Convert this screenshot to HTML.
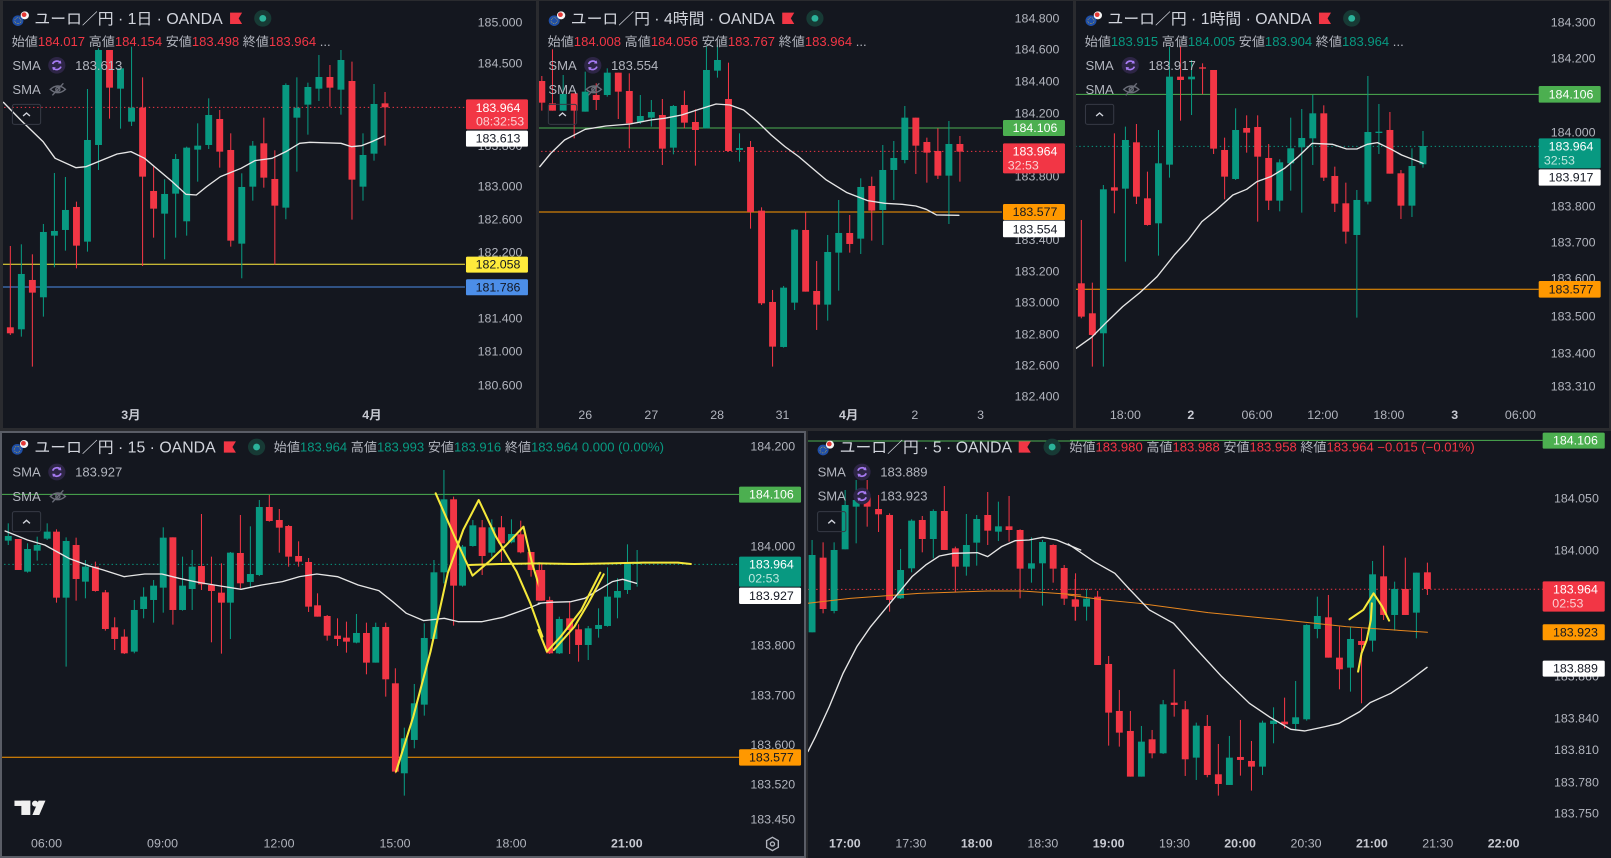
<!DOCTYPE html>
<html><head><meta charset="utf-8">
<style>
html,body{margin:0;padding:0;background:#2a2b2f;width:1611px;height:858px;overflow:hidden}
svg{display:block}
text{font-family:"Liberation Sans","Noto Sans CJK JP",sans-serif}
.ax{font-size:36px;fill:#b2b5be;text-anchor:end}
.tm{font-size:36px;fill:#b2b5be;text-anchor:middle}
.tb{font-weight:bold;fill:#c8cad2}
.tt{font-size:46px;fill:#d1d4dc}
.lg{font-size:38px;fill:#b2b5be}
.lb{font-size:36px;text-anchor:middle}
</style></head><body>
<svg width="1611" height="858" viewBox="0 0 1611 858" xmlns="http://www.w3.org/2000/svg">
<defs>
<clipPath id="k1"><rect x="3" y="1" width="533" height="427"/></clipPath>
<clipPath id="k2"><rect x="539" y="1" width="534" height="427"/></clipPath>
<clipPath id="k3"><rect x="1076" y="1" width="533" height="427"/></clipPath>
<clipPath id="k4"><rect x="2" y="433" width="802" height="423"/></clipPath>
<clipPath id="k5"><rect x="808" y="431" width="803" height="427"/></clipPath>
<g id="sm"><circle r="25" fill="#2d2545"/><path d="M-12,-4 A13,13 0 0 1 11,-7 M12,4 A13,13 0 0 1 -11,7" stroke="#a77bf3" stroke-width="5" fill="none"/><path d="M11,-15 L13,-5 L3,-6 Z M-11,15 L-13,5 L-3,6Z" fill="#a77bf3"/></g>
<g id="eye"><path d="M-22,0 Q0,-20 22,0 Q0,20 -22,0Z" stroke="#6a6d78" stroke-width="4" fill="none"/><circle r="6" stroke="#6a6d78" stroke-width="4" fill="none"/><line x1="-16" y1="18" x2="16" y2="-18" stroke="#6a6d78" stroke-width="4"/></g>
<g id="ic"><circle cx="0" cy="0" r="16" fill="#1f4fa8"/><circle cx="0" cy="0" r="9" fill="none" stroke="#f3c623" stroke-width="2" stroke-dasharray="2 3"/><circle cx="20" cy="-16" r="12" fill="#f5f5f5"/><circle cx="18" cy="-18" r="7" fill="#e53935"/></g>
<g id="bt"><rect x="0" y="0" width="82" height="60" rx="6" fill="none" stroke="#363a45" stroke-width="3"/><path d="M31,35 L41,26 L51,35" stroke="#d1d4dc" stroke-width="4" fill="none"/></g>
</defs>
<rect x="0" y="0" width="1611" height="858" fill="#2a2b2f"/>
<rect x="3" y="1" width="533" height="427" fill="#14171f"/>
<rect x="539" y="1" width="534" height="427" fill="#14171f"/>
<rect x="1076" y="1" width="533" height="427" fill="#14171f"/>
<rect x="1" y="432" width="804" height="425" fill="#14171f" stroke="#5a5d66" stroke-width="2"/>
<rect x="808" y="431" width="803" height="427" fill="#14171f"/>

<!-- PANEL 1 -->
<g clip-path="url(#k1)"><g transform="translate(0,0) scale(0.3444,0.3333)">
<line x1="0" y1="322" x2="1350" y2="322" stroke="#f23645" stroke-width="3" stroke-dasharray="4 8"/>
<line x1="0" y1="793" x2="1350" y2="793" stroke="#ffeb3b" stroke-width="3"/>
<line x1="0" y1="861" x2="1350" y2="861" stroke="#4c8ee8" stroke-width="3"/>
<g id="c1"></g>
<text class="ax" x="1517" y="80">185.000</text><text class="ax" x="1517" y="202">184.500</text><text class="ax" x="1517" y="450">183.800</text><text class="ax" x="1517" y="572">183.000</text><text class="ax" x="1517" y="670">182.600</text><text class="ax" x="1517" y="769">182.200</text><text class="ax" x="1517" y="967">181.400</text><text class="ax" x="1517" y="1066">181.000</text><text class="ax" x="1517" y="1169">180.600</text>
<rect x="1353" y="298" width="180" height="90" rx="4" fill="#f23645"/><text class="lb" x="1446" y="336" fill="#fff">183.964</text><text class="lb" x="1452" y="377" fill="#fbd0d3">08:32:53</text>
<rect x="1353" y="392" width="180" height="48" rx="4" fill="#fff"/><text class="lb" x="1446" y="428" fill="#131722">183.613</text>
<rect x="1353" y="770" width="180" height="48" rx="4" fill="#ffeb3b"/><text class="lb" x="1446" y="806" fill="#131722">182.058</text>
<rect x="1353" y="838" width="180" height="48" rx="4" fill="#4c8ee8"/><text class="lb" x="1446" y="874" fill="#131722">181.786</text>
<text class="tm tb" x="380" y="1257">3月</text><text class="tm tb" x="1080" y="1257">4月</text>
<use href="#ic" x="52" y="62"/><text class="tt" x="100" y="72">ユーロ／円 · 1日 · OANDA</text>
<path d="M668,38 h35 l-10,17 l10,17 h-35z" fill="#f23645"/><circle cx="763" cy="55" r="25" fill="#173a35"/><circle cx="763" cy="55" r="10" fill="#2bb39a"/>
<text class="lg" x="34" y="138">始値<tspan fill="#f23645">184.017</tspan> 高値<tspan fill="#f23645">184.154</tspan> 安値<tspan fill="#f23645">183.498</tspan> 終値<tspan fill="#f23645">183.964</tspan> ...</text>
<text class="lg" x="36" y="210">SMA</text><use href="#sm" x="165" y="196"/><text class="lg" x="218" y="210" fill="#e8e9ed">183.613</text>
<text class="lg" x="36" y="282" fill="#4e515b">SMA</text><use href="#eye" x="168" y="268"/>
<use href="#bt" x="36" y="313"/>
</g></g>

<!-- PANEL 2 -->
<g clip-path="url(#k2)"><g transform="translate(537,0) scale(0.3444,0.3333)">
<line x1="0" y1="384" x2="1350" y2="384" stroke="#4caf50" stroke-width="3"/>
<line x1="0" y1="454" x2="1350" y2="454" stroke="#f23645" stroke-width="3" stroke-dasharray="4 8"/>
<line x1="0" y1="636" x2="1350" y2="636" stroke="#ff9800" stroke-width="3"/>
<g id="c2"></g>
<text class="ax" x="1517" y="67">184.800</text><text class="ax" x="1517" y="160">184.600</text><text class="ax" x="1517" y="257">184.400</text><text class="ax" x="1517" y="352">184.200</text><text class="ax" x="1517" y="542">183.800</text><text class="ax" x="1517" y="732">183.400</text><text class="ax" x="1517" y="827">183.200</text><text class="ax" x="1517" y="919">183.000</text><text class="ax" x="1517" y="1015">182.800</text><text class="ax" x="1517" y="1109">182.600</text><text class="ax" x="1517" y="1202">182.400</text>
<rect x="1353" y="360" width="180" height="48" rx="4" fill="#4caf50"/><text class="lb" x="1446" y="396" fill="#fff">184.106</text>
<rect x="1353" y="430" width="180" height="90" rx="4" fill="#f23645"/><text class="lb" x="1446" y="467" fill="#fff">183.964</text><text class="lb" x="1412" y="508" fill="#fbd0d3">32:53</text>
<rect x="1353" y="612" width="180" height="48" rx="4" fill="#ff9800"/><text class="lb" x="1446" y="648" fill="#131722">183.577</text>
<rect x="1353" y="662" width="180" height="50" rx="4" fill="#fff"/><text class="lb" x="1446" y="700" fill="#131722">183.554</text>
<text class="tm" x="140" y="1257">26</text><text class="tm" x="332" y="1257">27</text><text class="tm" x="523" y="1257">28</text><text class="tm" x="713" y="1257">31</text><text class="tm tb" x="905" y="1257">4月</text><text class="tm" x="1097" y="1257">2</text><text class="tm" x="1288" y="1257">3</text>
<use href="#ic" x="50" y="62"/><text class="tt" x="98" y="72">ユーロ／円 · 4時間 · OANDA</text>
<path d="M712,38 h35 l-10,17 l10,17 h-35z" fill="#f23645"/><circle cx="807" cy="55" r="25" fill="#173a35"/><circle cx="807" cy="55" r="10" fill="#2bb39a"/>
<text class="lg" x="31" y="138">始値<tspan fill="#f23645">184.008</tspan> 高値<tspan fill="#f23645">184.056</tspan> 安値<tspan fill="#f23645">183.767</tspan> 終値<tspan fill="#f23645">183.964</tspan> ...</text>
<text class="lg" x="33" y="210">SMA</text><use href="#sm" x="162" y="196"/><text class="lg" x="215" y="210" fill="#e8e9ed">183.554</text>
<text class="lg" x="33" y="282" fill="#4e515b">SMA</text><use href="#eye" x="165" y="268"/>
<use href="#bt" x="33" y="313"/>
</g></g>

<!-- PANEL 3 -->
<g clip-path="url(#k3)"><g transform="translate(1071,0) scale(0.3444,0.3333)">
<line x1="0" y1="283" x2="1358" y2="283" stroke="#4caf50" stroke-width="3"/>
<line x1="0" y1="439" x2="1358" y2="439" stroke="#089981" stroke-width="3" stroke-dasharray="4 8"/>
<line x1="0" y1="868" x2="1358" y2="868" stroke="#ff9800" stroke-width="3"/>
<g id="c3"></g>
<text class="ax" x="1523" y="80">184.300</text><text class="ax" x="1523" y="187">184.200</text><text class="ax" x="1523" y="409">184.000</text><text class="ax" x="1523" y="632">183.800</text><text class="ax" x="1523" y="739">183.700</text><text class="ax" x="1523" y="847">183.600</text><text class="ax" x="1523" y="962">183.500</text><text class="ax" x="1523" y="1072">183.400</text><text class="ax" x="1523" y="1172">183.310</text>
<rect x="1358" y="258" width="180" height="50" rx="4" fill="#4caf50"/><text class="lb" x="1452" y="296" fill="#fff">184.106</text>
<rect x="1358" y="415" width="180" height="90" rx="4" fill="#089981"/><text class="lb" x="1452" y="452" fill="#fff">183.964</text><text class="lb" x="1418" y="494" fill="#bfe8df">32:53</text>
<rect x="1358" y="508" width="180" height="49" rx="4" fill="#fff"/><text class="lb" x="1452" y="545" fill="#131722">183.917</text>
<rect x="1358" y="843" width="180" height="50" rx="4" fill="#ff9800"/><text class="lb" x="1452" y="881" fill="#131722">183.577</text>
<text class="tm" x="158" y="1257">18:00</text><text class="tm tb" x="348" y="1257">2</text><text class="tm" x="540" y="1257">06:00</text><text class="tm" x="731" y="1257">12:00</text><text class="tm" x="923" y="1257">18:00</text><text class="tm tb" x="1114" y="1257">3</text><text class="tm" x="1305" y="1257">06:00</text>
<use href="#ic" x="58" y="62"/><text class="tt" x="106" y="72">ユーロ／円 · 1時間 · OANDA</text>
<path d="M720,38 h35 l-10,17 l10,17 h-35z" fill="#f23645"/><circle cx="815" cy="55" r="25" fill="#173a35"/><circle cx="815" cy="55" r="10" fill="#2bb39a"/>
<text class="lg" x="40" y="138">始値<tspan fill="#089981">183.915</tspan> 高値<tspan fill="#089981">184.005</tspan> 安値<tspan fill="#089981">183.904</tspan> 終値<tspan fill="#089981">183.964</tspan> ...</text>
<text class="lg" x="42" y="210">SMA</text><use href="#sm" x="172" y="196"/><text class="lg" x="225" y="210" fill="#e8e9ed">183.917</text>
<text class="lg" x="42" y="282" fill="#4e515b">SMA</text><use href="#eye" x="175" y="268"/>
<use href="#bt" x="42" y="313"/>
</g></g>

<!-- PANEL 4 -->
<g clip-path="url(#k4)">
<g transform="translate(0,430) scale(0.3444,0.3333)">
<line x1="0" y1="193" x2="2146" y2="193" stroke="#4caf50" stroke-width="3"/>
<line x1="0" y1="403" x2="2146" y2="403" stroke="#089981" stroke-width="3" stroke-dasharray="4 8"/>
<line x1="0" y1="982" x2="2146" y2="982" stroke="#ff9800" stroke-width="3"/>
<g id="c4a"></g>
<text class="tm" x="135" y="1252">06:00</text><text class="tm" x="472" y="1252">09:00</text><text class="tm" x="810" y="1252">12:00</text><text class="tm" x="1147" y="1252">15:00</text><text class="tm" x="1484" y="1252">18:00</text>
<g fill="#f0f0f0"><rect x="42" y="1112" width="46" height="16"/><rect x="62" y="1112" width="26" height="43"/><circle cx="102" cy="1121" r="9"/><path d="M112,1112 h20 l-18,43 h-20z"/></g>
<use href="#ic" x="50" y="58"/><text class="tt" x="100" y="68">ユーロ／円 · 15 · OANDA</text>
<path d="M650,34 h35 l-10,17 l10,17 h-35z" fill="#f23645"/><circle cx="745" cy="51" r="25" fill="#173a35"/><circle cx="745" cy="51" r="10" fill="#2bb39a"/>
<text class="lg" x="795" y="64">始値<tspan fill="#089981">183.964</tspan> 高値<tspan fill="#089981">183.993</tspan> 安値<tspan fill="#089981">183.916</tspan> 終値<tspan fill="#089981">183.964</tspan> <tspan fill="#089981">0.000 (0.00%)</tspan></text>
<text class="lg" x="36" y="140">SMA</text><use href="#sm" x="165" y="126"/><text class="lg" x="218" y="140" fill="#e8e9ed">183.927</text>
<text class="lg" x="36" y="213" fill="#4e515b">SMA</text><use href="#eye" x="168" y="199"/>
<use href="#bt" x="36" y="245"/>
</g>
<g transform="translate(540,430) scale(0.3444,0.3333)">
<g id="c4b"></g>
<text class="ax" x="741" y="62">184.200</text><text class="ax" x="741" y="362">184.000</text><text class="ax" x="741" y="659">183.800</text><text class="ax" x="741" y="809">183.700</text><text class="ax" x="741" y="957">183.600</text><text class="ax" x="741" y="1075">183.520</text><text class="ax" x="741" y="1180">183.450</text>
<rect x="578" y="170" width="180" height="48" rx="4" fill="#4caf50"/><text class="lb" x="672" y="206" fill="#fff">184.106</text>
<rect x="578" y="380" width="180" height="90" rx="4" fill="#089981"/><text class="lb" x="672" y="416" fill="#fff">183.964</text><text class="lb" x="650" y="458" fill="#bfe8df">02:53</text>
<rect x="578" y="473" width="180" height="49" rx="4" fill="#fff"/><text class="lb" x="672" y="510" fill="#131722">183.927</text>
<rect x="578" y="958" width="180" height="49" rx="4" fill="#ff9800"/><text class="lb" x="672" y="995" fill="#131722">183.577</text>
<text class="tm tb" x="252" y="1252">21:00</text>
<path d="M675,1222 l17,10 v20 l-17,10 l-17,-10 v-20z" fill="none" stroke="#b2b5be" stroke-width="4"/><circle cx="675" cy="1242" r="6" fill="none" stroke="#b2b5be" stroke-width="4"/>
</g>
</g>

<!-- PANEL 5 -->
<g clip-path="url(#k5)">
<g transform="translate(540,430) scale(0.3444,0.3333)">
<line x1="778" y1="478" x2="1600" y2="478" stroke="#f23645" stroke-width="3" stroke-dasharray="4 8"/>
<line x1="778" y1="33" x2="1600" y2="33" stroke="#4caf50" stroke-width="3"/>
<g id="c5a"></g>
<text class="tm tb" x="885" y="1252">17:00</text><text class="tm" x="1077" y="1252">17:30</text><text class="tm tb" x="1268" y="1252">18:00</text><text class="tm" x="1460" y="1252">18:30</text>
<use href="#ic" x="822" y="60"/><text class="tt" x="870" y="68">ユーロ／円 · 5 · OANDA</text>
<path d="M1390,34 h35 l-10,17 l10,17 h-35z" fill="#f23645"/><circle cx="1487" cy="51" r="25" fill="#173a35"/><circle cx="1487" cy="51" r="10" fill="#2bb39a"/>
<text class="lg" x="1537" y="64">始値<tspan fill="#f23645">183.980</tspan> 高値<tspan fill="#f23645">183.988</tspan> 安値<tspan fill="#f23645">183.958</tspan> 終値<tspan fill="#f23645">183.964</tspan> <tspan fill="#f23645">−0.015 (−0.01%)</tspan></text>
<text class="lg" x="806" y="140">SMA</text><use href="#sm" x="935" y="126"/><text class="lg" x="988" y="140" fill="#e8e9ed">183.889</text>
<text class="lg" x="806" y="212">SMA</text><use href="#sm" x="935" y="198"/><text class="lg" x="988" y="212" fill="#f7931a">183.923</text>
<use href="#bt" x="806" y="245"/>
</g>
<g transform="translate(1070,380) scale(0.345,0.3333)">
<line x1="0" y1="628" x2="1370" y2="628" stroke="#f23645" stroke-width="3" stroke-dasharray="4 8"/>
<line x1="0" y1="181" x2="1370" y2="181" stroke="#4caf50" stroke-width="3"/>
<g id="c5b"></g>
<text class="ax" x="1533" y="367">184.050</text><text class="ax" x="1533" y="524">184.000</text><text class="ax" x="1533" y="902">183.860</text><text class="ax" x="1533" y="1027">183.840</text><text class="ax" x="1533" y="1122">183.810</text><text class="ax" x="1533" y="1219">183.780</text><text class="ax" x="1533" y="1312">183.750</text>
<rect x="1370" y="158" width="180" height="48" rx="4" fill="#4caf50"/><text class="lb" x="1465" y="194" fill="#fff">184.106</text>
<rect x="1370" y="604" width="180" height="91" rx="4" fill="#f23645"/><text class="lb" x="1465" y="641" fill="#fff">183.964</text><text class="lb" x="1443" y="683" fill="#fbd0d3">02:53</text>
<rect x="1370" y="733" width="180" height="48" rx="4" fill="#ff9800"/><text class="lb" x="1465" y="769" fill="#131722">183.923</text>
<rect x="1370" y="842" width="180" height="48" rx="4" fill="#fff"/><text class="lb" x="1465" y="878" fill="#131722">183.889</text>
<text class="tm tb" x="112" y="1402">19:00</text><text class="tm" x="303" y="1402">19:30</text><text class="tm tb" x="493" y="1402">20:00</text><text class="tm" x="684" y="1402">20:30</text><text class="tm tb" x="875" y="1402">21:00</text><text class="tm" x="1066" y="1402">21:30</text><text class="tm tb" x="1257" y="1402">22:00</text>
</g>
</g>
</svg>
<script>
const NS="http://www.w3.org/2000/svg",GC="#089981",RC="#f23645";
function el(p,t,a){const e=document.createElementNS(NS,t);for(const k in a)e.setAttribute(k,a[k]);p.appendChild(e);return e}
function C(id,arr,w){const g=document.getElementById(id);w=w||20;
for(const [x,bt,bb,wt,wb,c] of arr){const col=c=='g'?GC:RC;
el(g,'line',{x1:x,x2:x,y1:wt,y2:wb,stroke:col,'stroke-width':3});
el(g,'rect',{x:x-w/2,y:bt,width:w,height:Math.max(bb-bt,4),fill:col});}}
function L(id,pts,col,w){const g=document.getElementById(id);
el(g,'polyline',{points:pts.map(p=>p.join(',')).join(' '),fill:'none',stroke:col,'stroke-width':w||4,'stroke-linejoin':'round','stroke-linecap':'round'});}
C('c1',[[30,982,1000,738,1005,'r'],[62,822,988,733,1010,'g'],[94,840,878,763,1100,'r'],[126,696,892,672,950,'g'],[158,693,707,519,802,'g'],[190,630,690,531,752,'g'],[222,621,737,605,805,'r'],[254,420,725,267,755,'g'],[286,150,435,145,510,'g'],[318,150,263,150,356,'r'],[350,205,266,205,386,'g'],[382,323,365,140,378,'g'],[414,323,530,232,798,'r'],[446,573,626,500,713,'r'],[478,582,641,538,778,'g'],[510,477,581,462,713,'g'],[542,443,664,440,707,'g'],[574,437,449,370,545,'g'],[606,345,435,295,447,'g'],[638,357,455,330,503,'r'],[670,450,722,400,740,'r'],[702,561,731,520,835,'g'],[734,437,560,423,602,'g'],[766,430,533,353,563,'r'],[798,537,617,451,793,'r'],[830,255,623,250,658,'g'],[862,323,353,232,515,'g'],[894,261,314,248,404,'g'],[926,231,266,165,303,'g'],[958,231,263,195,320,'r'],[990,180,269,150,344,'g'],[1022,243,539,185,659,'r'],[1054,465,560,400,602,'g'],[1086,312,461,252,482,'g'],[1118,310,322,276,437,'r']]);
L('c1',[[10,307],[60,360],[125,425],[160,475],[220,503],[250,500],[290,483],[340,462],[380,455],[420,475],[460,510],[500,545],[540,583],[570,585],[600,560],[640,530],[700,505],[740,482],[790,475],[830,455],[870,430],[900,427],[990,430],[1020,440],[1050,437],[1080,425],[1116,408]],'#e6e6e6');
C('c2',[[14,243,308,228,332,'r'],[45,310,332,148,332,'r'],[76,282,332,225,332,'g'],[108,280,332,280,415,'r'],[140,275,335,215,335,'g'],[172,285,300,250,330,'r'],[204,218,285,205,290,'g'],[236,218,275,218,357,'r'],[268,273,370,220,445,'r'],[300,348,366,285,372,'g'],[332,336,353,300,380,'g'],[364,345,446,297,495,'r'],[396,318,443,315,463,'g'],[428,315,368,272,385,'r'],[460,366,390,328,497,'r'],[492,210,385,140,385,'g'],[524,180,212,135,233,'g'],[556,297,453,188,455,'r'],[588,444,450,400,485,'g'],[620,441,636,423,686,'r'],[652,632,910,622,915,'r'],[684,906,1040,870,1100,'r'],[716,863,1041,858,1043,'g'],[748,689,908,687,930,'g'],[780,690,875,637,875,'r'],[812,873,914,783,990,'r'],[844,756,914,705,962,'g'],[876,699,758,600,872,'g'],[908,699,732,645,758,'r'],[940,561,716,535,762,'g'],[972,558,632,530,722,'r'],[1004,510,630,435,735,'g'],[1036,474,510,423,600,'g'],[1068,353,480,318,490,'g'],[1100,353,437,353,522,'r'],[1132,426,458,413,548,'r'],[1164,453,527,385,537,'r'],[1196,432,527,363,672,'g'],[1228,432,455,408,545,'r']]);
L('c2',[[8,500],[40,460],[80,420],[140,388],[200,378],[270,372],[330,360],[370,355],[420,345],[470,328],[520,312],[560,315],[600,330],[640,365],[680,405],[720,440],[760,470],[800,505],[840,540],[900,578],[960,602],[1010,610],[1060,613],[1100,618],[1130,628],[1160,645],[1225,646]],'#e6e6e6');
C('c3',[[30,850,950,660,955,'r'],[62,940,1005,848,1100,'r'],[94,568,1000,555,1100,'g'],[126,562,572,400,640,'r'],[158,420,566,380,785,'g'],[190,427,590,372,612,'r'],[222,595,675,515,677,'r'],[254,490,670,390,767,'g'],[286,230,494,140,533,'g'],[318,230,240,140,362,'r'],[350,230,238,180,345,'g'],[382,202,206,190,283,'r'],[414,210,446,210,462,'r'],[446,450,530,413,598,'r'],[478,390,537,325,540,'g'],[510,384,398,346,458,'r'],[542,381,470,346,665,'r'],[574,474,602,432,630,'r'],[606,487,602,478,634,'g'],[638,445,490,353,572,'g'],[670,414,442,327,638,'g'],[702,340,415,285,495,'g'],[734,340,533,316,543,'r'],[766,528,611,500,636,'r'],[798,610,695,548,731,'r'],[830,600,705,570,953,'g'],[862,396,605,228,613,'g'],[894,395,398,312,462,'g'],[926,390,521,336,521,'r'],[958,520,617,510,657,'r'],[990,498,617,445,651,'g'],[1022,438,493,393,503,'g']]);
L('c3',[[15,1045],[60,1012],[100,970],[150,920],[200,878],[250,830],[300,765],[340,720],[380,665],[420,632],[470,585],[510,568],[540,545],[580,530],[620,505],[660,470],[700,430],[760,433],[800,447],[830,447],[860,433],[890,428],[930,448],[960,465],[1022,490]],'#e6e6e6');
C('c4a',[[24,318,332,280,345,'g'],[53,327,420,327,420,'r'],[80,357,425,340,428,'g'],[108,345,362,320,392,'g'],[137,305,326,280,330,'g'],[164,305,503,298,518,'r'],[192,333,503,322,710,'g'],[221,345,447,323,512,'r'],[248,410,455,390,505,'g'],[277,410,483,395,485,'r'],[306,487,597,480,602,'r'],[333,592,627,562,660,'r'],[361,620,670,598,672,'r'],[390,540,665,510,670,'g'],[417,500,537,472,565,'g'],[446,467,510,450,578,'g'],[474,323,473,292,548,'g'],[502,322,540,322,584,'r'],[530,467,540,380,542,'g'],[558,410,477,360,540,'g'],[585,408,463,252,480,'r'],[614,465,483,380,637,'r'],[643,488,518,400,671,'r'],[669,368,518,366,627,'g'],[698,369,460,255,475,'r'],[727,432,456,289,470,'g'],[753,231,435,210,438,'g'],[782,231,273,195,275,'r'],[811,270,293,237,368,'r'],[838,288,380,285,410,'r'],[867,378,395,334,410,'r'],[896,396,530,384,546,'r'],[922,526,560,490,560,'r'],[950,558,617,555,632,'r'],[980,617,627,565,648,'r'],[1006,623,635,575,668,'r'],[1035,609,638,552,640,'g'],[1064,609,698,578,733,'r'],[1091,591,698,578,698,'g'],[1120,591,748,578,800,'r'],[1148,760,1025,715,1030,'r'],[1174,925,1030,893,1097,'g'],[1203,820,930,762,955,'g'],[1232,624,824,580,857,'g'],[1260,427,627,390,627,'g'],[1289,208,427,120,460,'g'],[1317,208,467,200,587,'r'],[1343,350,467,345,470,'g'],[1373,286,348,270,350,'g'],[1400,292,378,270,435,'r'],[1428,292,368,268,380,'g'],[1456,292,340,258,395,'r'],[1485,312,337,268,340,'g'],[1512,313,367,272,370,'r'],[1542,366,420,366,440,'r'],[1566,420,512,400,512,'r']]);
L('c4a',[[15,303],[80,330],[130,345],[200,385],[260,408],[300,420],[360,440],[420,432],[470,432],[520,445],[580,458],[640,468],[700,478],[760,465],[820,455],[870,440],[920,432],[980,440],[1040,465],[1100,482],[1140,515],[1180,550],[1230,572],[1290,565],[1330,575],[1400,575],[1460,562],[1520,540],[1570,520]],'#e6e6e6');
L('c4a',[[1150,1025],[1200,860],[1250,665],[1300,430],[1345,300],[1390,210],[1440,320],[1500,425],[1540,520],[1575,620]],'#f5e83a',6);
L('c4a',[[1265,190],[1320,320],[1372,437],[1420,395],[1470,345],[1520,290],[1545,400],[1575,500]],'#f5e83a',6);
L('c4a',[[1360,405],[1450,402],[1568,400]],'#f5e83a',6);
C('c4b',[[5,420,512,400,512,'r'],[28,510,670,500,672,'r'],[56,567,670,560,672,'g'],[86,565,600,513,672,'r'],[112,598,645,583,695,'r'],[140,595,645,588,690,'g'],[170,585,597,535,623,'g'],[196,500,588,412,590,'g'],[225,483,503,445,565,'g'],[254,400,480,343,492,'g'],[282,398,402,360,470,'g']]);
L('c4b',[[-5,520],[30,517],[90,515],[130,505],[170,480],[210,455],[240,448],[280,460]],'#e6e6e6');
L('c4b',[[-5,600],[20,665],[60,620],[120,540],[175,428]],'#f5e83a',6);
L('c4b',[[40,660],[100,590],[140,520],[185,433]],'#f5e83a',6);
L('c4b',[[-5,400],[100,402],[200,400],[300,398],[400,398],[438,402]],'#f5e83a',6);
C('c5a',[[790,375,607,330,607,'g'],[822,383,537,337,550,'r'],[854,360,543,337,550,'g'],[886,225,358,180,358,'g'],[918,210,230,150,340,'g'],[950,200,230,150,290,'r'],[983,237,253,195,306,'r'],[1015,255,510,250,545,'r'],[1047,420,505,357,507,'g'],[1079,272,415,268,427,'g'],[1110,270,327,258,367,'r'],[1142,243,327,238,385,'g'],[1174,243,360,168,360,'r'],[1206,355,410,350,487,'r'],[1238,345,410,252,437,'g'],[1268,267,338,255,407,'g'],[1300,255,302,186,345,'r'],[1331,289,305,215,333,'g'],[1362,289,300,198,335,'r'],[1394,300,416,298,505,'r'],[1427,400,416,322,458,'g'],[1459,336,400,330,527,'g'],[1490,345,416,343,458,'r'],[1522,414,506,405,525,'r'],[1555,510,530,430,572,'r']]);
L('c5a',[[778,520],[900,505],[1010,497],[1100,490],[1300,483],[1400,483],[1570,495]],'#e8871e',3);
L('c5a',[[778,965],[800,920],[840,830],[880,730],[920,650],[960,590],[1000,540],[1040,490],[1080,440],[1120,405],[1160,378],[1200,370],[1270,368],[1300,380],[1340,350],[1380,332],[1420,330],[1460,322],[1500,330],[1570,360]],'#e6e6e6');
C('c5b',[[15,658,680,597,722,'r'],[48,656,680,627,722,'g'],[80,650,855,633,855,'r'],[112,852,998,828,1097,'r'],[143,993,1058,930,1100,'r'],[175,1053,1190,993,1190,'r'],[207,1085,1190,1038,1190,'g'],[238,1078,1120,1050,1135,'r'],[270,973,1120,960,1122,'g'],[302,968,975,868,1010,'r'],[334,988,1138,963,1188,'r'],[366,1037,1133,1028,1200,'g'],[398,1038,1185,1005,1192,'r'],[430,1183,1212,1092,1247,'r'],[462,1133,1215,1068,1215,'g'],[494,1131,1140,1020,1187,'r'],[526,1143,1160,1083,1232,'r'],[558,1028,1160,1022,1185,'g'],[590,1022,1032,982,1090,'g'],[622,1025,1033,953,1045,'r'],[654,1012,1032,903,1052,'g'],[686,735,1018,733,1022,'g'],[717,708,747,650,775,'g'],[749,712,833,645,833,'r'],[781,833,868,740,928,'r'],[813,777,863,740,935,'g'],[845,783,795,745,970,'r'],[877,583,782,543,815,'g'],[909,589,705,497,720,'r'],[941,627,705,605,752,'g'],[972,627,705,533,705,'r'],[1004,578,698,578,775,'g'],[1036,577,627,548,645,'r']]);
L('c5b',[[-5,645],[100,660],[200,670],[400,698],[600,718],[800,740],[1036,757]],'#e8871e',3);
L('c5b',[[-5,492],[70,545],[130,580],[170,625],[230,690],[300,730],[360,800],[440,890],[520,970],[580,1012],[640,1048],[680,1053],[740,1040],[780,1030],[840,995],[870,968],[930,940],[980,905],[1035,862]],'#e6e6e6');
L('c5b',[[810,718],[850,690],[880,640],[905,680],[925,722]],'#f5e83a',6);
L('c5b',[[835,875],[845,820],[860,780],[872,720],[875,670]],'#f5e83a',6);
</script>
</body></html>
